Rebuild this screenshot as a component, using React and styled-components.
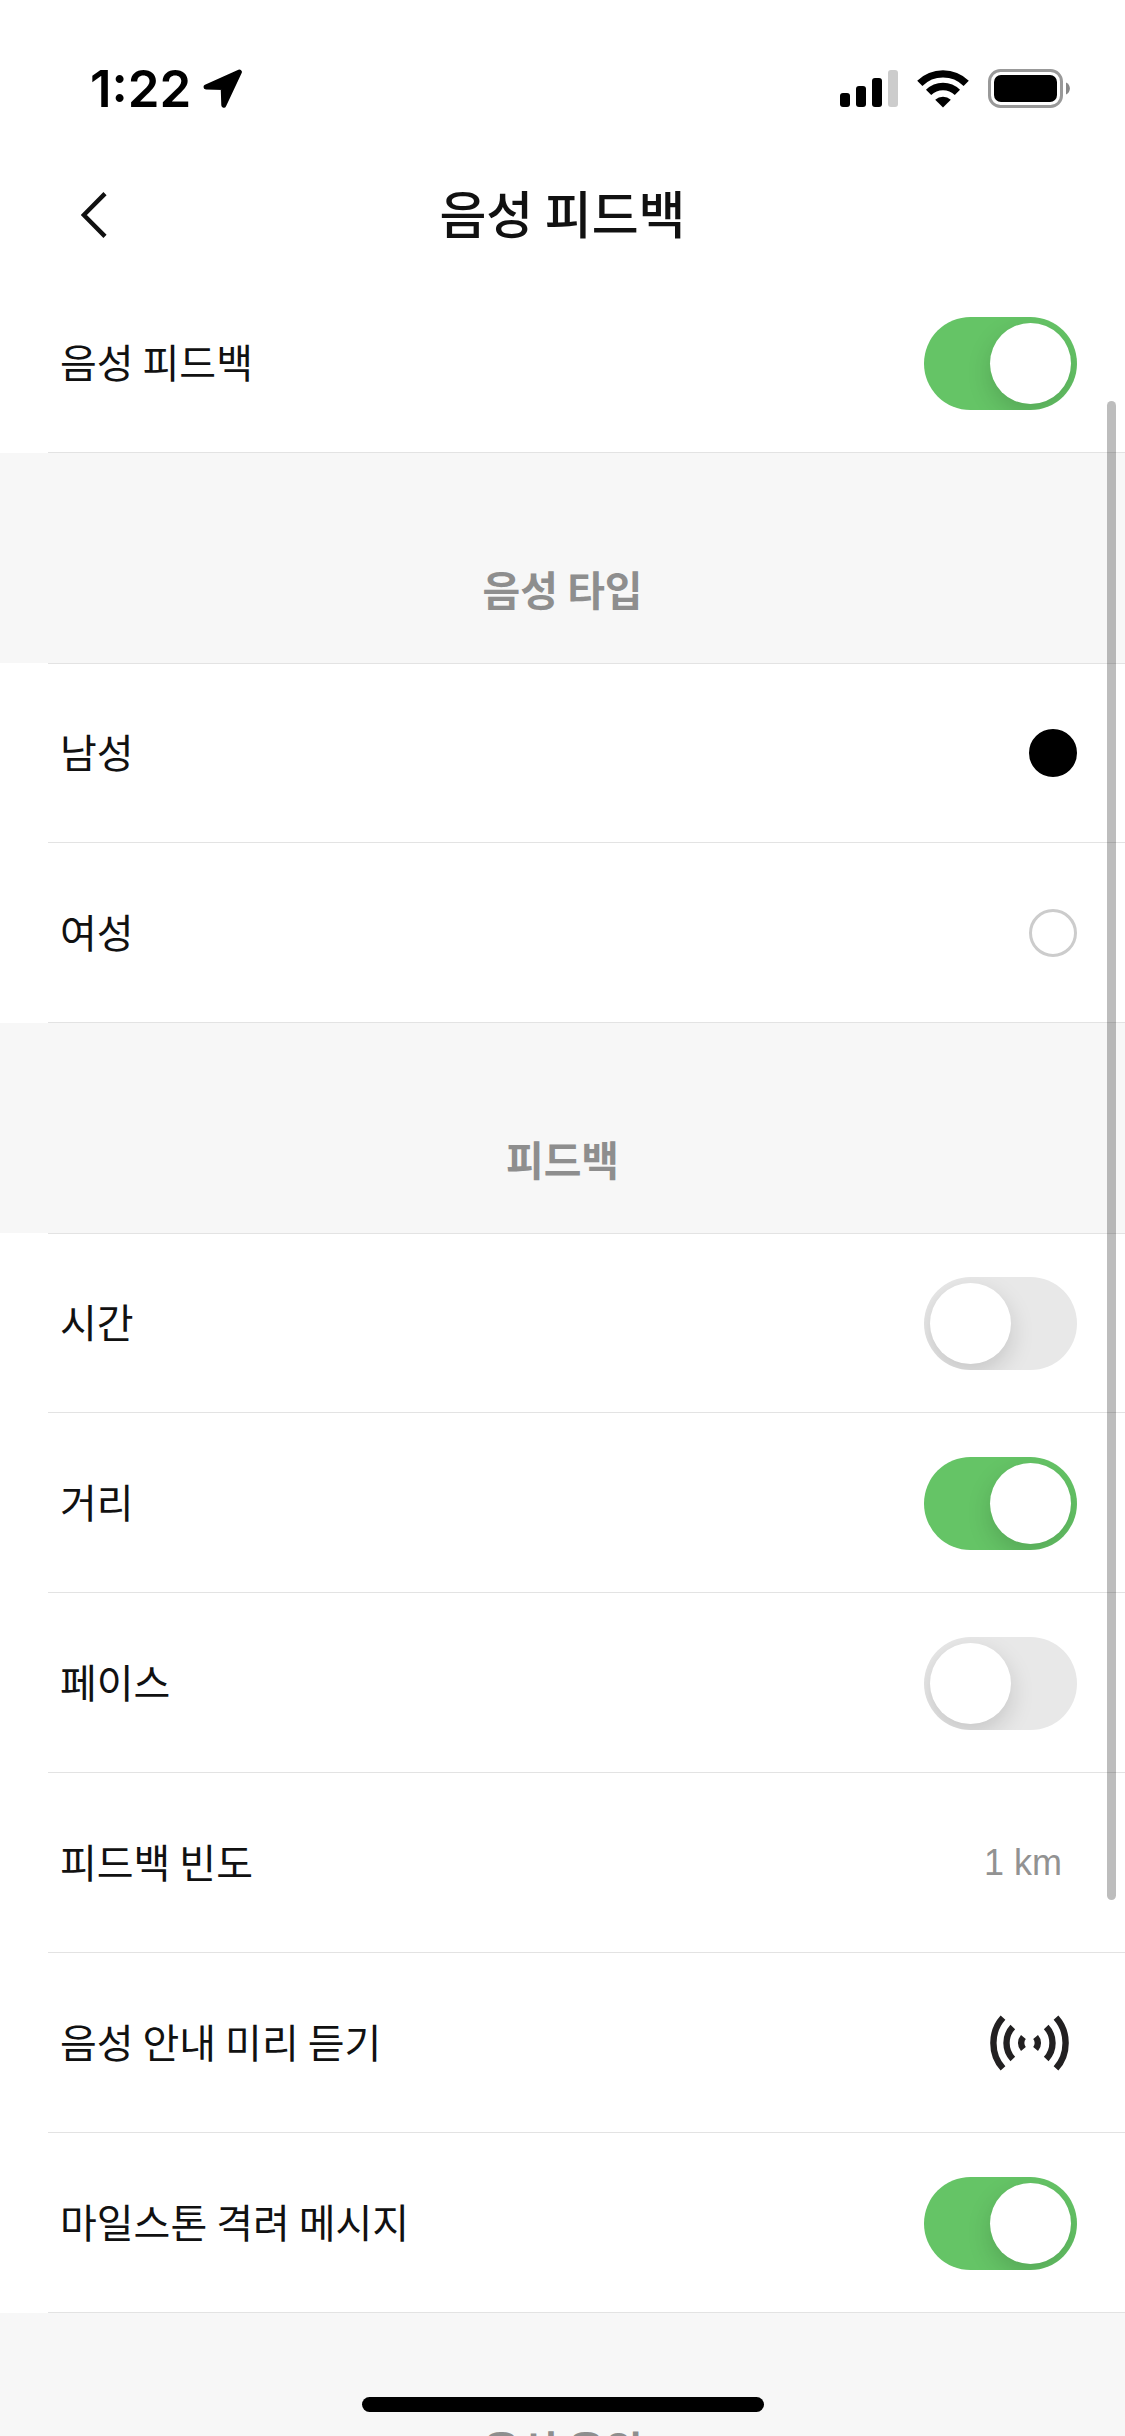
import { useState } from 'react'
import styled, { createGlobalStyle } from 'styled-components'

const Wifi = () => (
  <svg width="52" height="38" viewBox="0 0 52 38" fill="none" aria-hidden="true">
    <path d="M2.8 13.4A33 33 0 0 1 49.2 13.4" stroke="#000" strokeWidth="7.4" />
    <path d="M11.6 22.4A20.4 20.4 0 0 1 40.4 22.4" stroke="#000" strokeWidth="7.4" />
    <path d="M26 37.6L18.2 29.8A11.4 11.4 0 0 1 33.8 29.8Z" fill="#000" />
  </svg>
)

const Signal = () => (
  <svg width="58" height="38" viewBox="0 0 58 38" aria-hidden="true">
    <rect x="0" y="23" width="10" height="14" rx="3" />
    <rect x="16" y="16" width="10" height="21" rx="3" />
    <rect x="32" y="8" width="10" height="29" rx="3" />
    <rect x="48" y="0" width="10" height="37" rx="3" fill="#ccc" />
  </svg>
)

const Battery = () => (
  <svg width="82" height="39" viewBox="0 0 82 39" aria-hidden="true">
    <rect x="1.5" y="1.5" width="72" height="36" rx="11" fill="none" stroke="#999" strokeWidth="3" />
    <rect x="6" y="6" width="63" height="27" rx="7" />
    <path d="M78 13.4C83.2 15.8 83.2 23.2 78 25.6Z" fill="#888" />
  </svg>
)

const LocationArrow = () => (
  <svg width="40" height="40" viewBox="0 0 40 40" aria-hidden="true">
    <path
      d="M36.4 3L20.8 36.2L20.2 18.6L3 18Z"
      stroke="#000"
      strokeWidth="5"
      strokeLinejoin="round"
    />
  </svg>
)

const Chevron = () => (
  <svg width="26" height="46" viewBox="0 0 26 46" fill="none" aria-hidden="true">
    <path d="M24 1.6L2.8 23L24 44.4" stroke="#111" strokeWidth="4.4" />
  </svg>
)

const SoundWaves = () => (
  <svg width="79" height="56" viewBox="0 0 79 56" fill="none" stroke="#222021" strokeWidth="6.4" aria-hidden="true">
    <path d="M13 2.6C0.2 16.6 0.2 39.4 13 53.4" />
    <path d="M22.8 12C14.4 21 14.4 35 22.8 44" />
    <path d="M33.4 22C30.4 25.4 30.4 30.6 33.4 34" />
    <path d="M45.6 22C48.6 25.4 48.6 30.6 45.6 34" />
    <path d="M56.2 12C64.6 21 64.6 35 56.2 44" />
    <path d="M66 2.6C78.8 16.6 78.8 39.4 66 53.4" />
  </svg>
)

const Toggle = ({ id, label, defaultChecked }) => (
  <Row>
    <Label htmlFor={id}>{label}</Label>
    <Switch id={id} type="checkbox" role="switch" defaultChecked={defaultChecked} />
  </Row>
)

const App = () => {
  const [voice, setVoice] = useState('male')

  return (
    <Screen>
      <GlobalStyle />
      <StatusBar>
        <Clock>
          <span>1:22</span>
          <LocationArrow />
        </Clock>
        <Indicators>
          <Signal />
          <Wifi />
          <Battery />
        </Indicators>
      </StatusBar>

      <Header>
        <BackButton type="button" aria-label="뒤로">
          <Chevron />
        </BackButton>
        <Title>음성 피드백</Title>
      </Header>

      <main>
        <Toggle id="feedback" label="음성 피드백" defaultChecked />

        <SectionTitle>음성 타입</SectionTitle>
        <Row>
          <Label htmlFor="male">남성</Label>
          <Radio
            id="male"
            type="radio"
            name="voice"
            checked={voice === 'male'}
            onChange={() => setVoice('male')}
          />
        </Row>
        <Row>
          <Label htmlFor="female">여성</Label>
          <Radio
            id="female"
            type="radio"
            name="voice"
            checked={voice === 'female'}
            onChange={() => setVoice('female')}
          />
        </Row>

        <SectionTitle>피드백</SectionTitle>
        <Toggle id="time" label="시간" />
        <Toggle id="distance" label="거리" defaultChecked />
        <Toggle id="pace" label="페이스" />
        <RowButton type="button">
          <Label as="span">피드백 빈도</Label>
          <Value>1 km</Value>
        </RowButton>
        <RowButton type="button">
          <Label as="span">음성 안내 미리 듣기</Label>
          <IconSlot>
            <SoundWaves />
          </IconSlot>
        </RowButton>
        <Toggle id="milestone" label="마일스톤 격려 메시지" defaultChecked />

        <SectionTitle>음성 응원</SectionTitle>
      </main>

      <Scrollbar />
      <HomeIndicator />
    </Screen>
  )
}

const GlobalStyle = createGlobalStyle`
  * {
    box-sizing: border-box;
  }

  body {
    margin: 0;
    background: #fff;
    color: #111;
    font-family: 'Liberation Sans', 'Noto Sans CJK KR', sans-serif;
  }
`

const Screen = styled.div`
  position: relative;
  height: 100vh;
  overflow: hidden;
`

const StatusBar = styled.div`
  display: flex;
  align-items: center;
  justify-content: space-between;
  height: 157px;
  padding: 20px 55px 0 90px;
`

const Clock = styled.div`
  display: flex;
  align-items: center;
  gap: 12px;
  color: #000;
  font-family: Inter, sans-serif;
  font-size: 51px;
  font-weight: 600;
  line-height: 60px;
`

const Indicators = styled.div`
  display: flex;
  align-items: center;
  gap: 19px;
`

const Header = styled.header`
  display: grid;
  grid-template-columns: 120px 1fr 120px;
  align-items: center;
  height: 116px;
`

const BackButton = styled.button`
  display: flex;
  align-items: center;
  height: 100%;
  padding: 0 0 0 81px;
  border: none;
  background: none;
`

const Title = styled.h1`
  margin: 0;
  padding-bottom: 6px;
  font-family: 'Noto Sans CJK KR', sans-serif;
  font-size: 51px;
  font-weight: 500;
  line-height: 76px;
  text-align: center;
`

const SectionTitle = styled.h2`
  display: flex;
  align-items: flex-end;
  justify-content: center;
  height: 210px;
  margin: 0;
  padding-bottom: 45px;
  background: #f7f7f7;
  color: #8e8e8e;
  font-family: 'Noto Sans CJK KR', sans-serif;
  font-size: 41px;
  font-weight: 700;
  line-height: 60px;
`

const Row = styled.div`
  display: flex;
  align-items: center;
  justify-content: space-between;
  width: 100%;
  height: 180px;
  padding: 0 48px 0 60px;
  background: linear-gradient(#e3e3e3, #e3e3e3) 48px 100% / 100% 1px no-repeat #fff;

  ${SectionTitle} + & {
    background:
      linear-gradient(#e3e3e3, #e3e3e3) 48px 0 / 100% 1px no-repeat,
      linear-gradient(#e3e3e3, #e3e3e3) 48px 100% / 100% 1px no-repeat #fff;
  }
`

const RowButton = styled(Row).attrs({ as: 'button' })`
  border: none;
  color: inherit;
  font: inherit;
  text-align: left;
`

const Label = styled.label`
  padding-bottom: 5px;
  font-family: 'Noto Sans CJK KR', sans-serif;
  font-size: 40px;
  font-weight: 400;
  line-height: 60px;
`

const Value = styled.span`
  padding-right: 15px;
  color: #929292;
  font-size: 36px;
  line-height: 48px;
`

const IconSlot = styled.span`
  display: flex;
  padding-right: 8px;
`

const Switch = styled.input`
  appearance: none;
  display: flex;
  align-items: center;
  width: 153px;
  height: 93px;
  margin: 0;
  padding: 0 6px;
  border-radius: 47px;
  background: #e8e8e8;
  overflow: hidden;

  &::before {
    content: '';
    width: 81px;
    height: 81px;
    border-radius: 50%;
    background: #fff;
    box-shadow: 0 9px 24px rgba(0, 0, 0, 0.15);
  }

  &:checked {
    justify-content: flex-end;
    background: #65c466;
  }
`

const Radio = styled.input`
  appearance: none;
  width: 48px;
  height: 48px;
  margin: 0;
  border: 3px solid #ccc;
  border-radius: 50%;

  &:checked {
    border-color: #000;
    background: #000;
  }
`

const Scrollbar = styled.div`
  position: absolute;
  top: 401px;
  right: 9px;
  width: 9px;
  height: 1499px;
  border-radius: 5px;
  background: rgba(0, 0, 0, 0.26);
`

const HomeIndicator = styled.div`
  position: absolute;
  bottom: 24px;
  left: 50%;
  width: 402px;
  height: 15px;
  border-radius: 8px;
  background: #000;
  transform: translateX(-50%);
`

export default App
